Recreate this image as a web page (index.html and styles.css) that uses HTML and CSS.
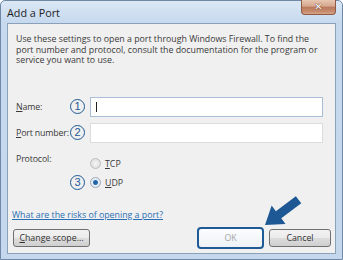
FILE: index.html
```html
<!DOCTYPE html>
<html lang="en">
<head>
    <meta charset="UTF-8">
    <title>Add a Port</title>
    <link rel="stylesheet" href="styles.css">
</head>
<body>
    <div class="window">
        <div class="titlebar">
            <span class="title">Add a Port</span>
            <span class="close">&#x2715;</span>
        </div>
        <div class="panel">
            <p class="intro">Use these settings to open a port through Windows Firewall. To find the port number and protocol, consult the documentation for the program or service you want to use.</p>

            <div class="field name">
                <span class="label"><u>N</u>ame:</span>
                <span class="num">1</span>
                <div class="input focused"><span class="caret"></span></div>
            </div>
            <div class="field port">
                <span class="label"><u>P</u>ort number:</span>
                <span class="num">2</span>
                <div class="input"></div>
            </div>
            <div class="field proto">
                <span class="label top">Protocol:</span>
                <span class="num empty"></span>
                <span class="radio"><span class="dot"></span><u>T</u>CP</span>
            </div>
            <div class="field udp">
                <span class="label"></span>
                <span class="num">3</span>
                <span class="radio checked"><span class="dot"></span><u>U</u>DP</span>
            </div>

            <a class="link" href="#">What are the risks of opening a port?</a>

            <div class="buttons">
                <span class="btn scope"><u>C</u>hange scope...</span>
                <span class="btn ok">OK</span>
                <span class="btn cancel">Cancel</span>
            </div>
        </div>

        <!-- pointer arrow over the OK button -->
        <svg class="arrow" width="50" height="40" viewBox="0 0 50 40">
            <polygon transform="translate(7,33) rotate(-37)" points="0,0 17,-11.5 17,-4.5 42,-4.5 42,4.5 17,4.5 17,11.5" fill="#1d5894"/>
        </svg>
    </div>
</body>
</html>
```

FILE: styles.css
```css
body,html{
    margin: 0;
    padding: 0;
}
body{
    width: 343px;
    height: 260px;
    background: #fff;
    font-family: "Open Sans", "Noto Sans", sans-serif;
}
.window{
    position: relative;
    box-sizing: border-box;
    width: 343px;
    height: 260px;
    border: 1px solid #6f88a6;
    border-radius: 5px 5px 0 0;
    padding: 0 6px 5px 6px;
    background: linear-gradient(#dbe7f4, #c6d9ee 22px, #c4d7ed);
}
.titlebar{
    display: flex;
    height: 22px;
}
.title{
    align-self: center;
    font-size: 10.8px;
    color: #1e1e1e;
    margin-top: 1px;
}
.close{
    margin-left: auto;
    margin-top: -1px;
    width: 35px;
    height: 15px;
    box-sizing: border-box;
    border: 1px solid #8e5a44;
    border-top: none;
    border-radius: 0 0 4px 4px;
    background: linear-gradient(#e8c7b2, #d5a68c 45%, #b9785b 50%, #c98d6f 85%, #d9a68a);
    color: #fff;
    font-family: "DejaVu Sans", sans-serif;
    font-size: 10px;
    font-weight: bold;
    line-height: 14px;
    text-align: center;
    text-shadow: 0 0 1px #6b3a26, 0 0 1px #6b3a26;
}
.panel{
    box-sizing: border-box;
    height: 231px;
    border: 1px solid #8ba0b9;
    background: #f0f0f0;
    padding: 0 4px 0 5px;
    font-size: 8.8px;
    color: #3a3a3a;
}
.intro{
    margin: 10px 4px 0 3px;
    line-height: 10.5px;
}
.field{
    display: flex;
    align-items: center;
    margin: 0 8px 0 3px;
}
.field.name{
    margin-top: 31px;
    height: 20px;
}
.field.port{
    margin-top: 6px;
    height: 20px;
}
.field.proto{
    margin-top: 10px;
    height: 22px;
}
.field.udp{
    margin-top: 1px;
    height: 14px;
}
.label{
    width: 54px;
    flex: none;
    white-space: nowrap;
    letter-spacing: -0.15px;
}
.label.top{
    align-self: flex-start;
    line-height: 12px;
}
.num{
    flex: none;
    width: 15px;
    height: 15px;
    margin-right: 5px;
    box-sizing: border-box;
    border: 1.6px solid #1d5894;
    border-radius: 50%;
    color: #1d5894;
    font-family: "Liberation Sans", sans-serif;
    font-size: 11px;
    line-height: 12px;
    text-align: center;
}
.num.empty{
    border: none;
}
.input{
    flex: 1;
    height: 20px;
    box-sizing: border-box;
    border: 1px solid #dcdcdc;
    background: #fff;
    padding: 4px 5px;
}
.input.focused{
    border-color: #a9bed6;
}
.caret{
    display: block;
    width: 1px;
    height: 10px;
    background: #222;
}
.radio{
    display: flex;
    align-items: center;
}
.dot{
    width: 9px;
    height: 9px;
    margin-right: 4px;
    border: 1px solid #bdbdbd;
    border-radius: 50%;
    background: radial-gradient(#f6f6f6, #d8d8d8);
}
.radio.checked .dot{
    border-color: #9aa9ba;
    background: radial-gradient(#1d5fa3 0, #2a6db0 2px, #e9eef4 3px, #dfe5ec);
}
.link{
    display: block;
    margin: 19px 0 0 -1px;
    line-height: 12px;
    color: #2a6fb3;
    text-decoration: underline;
}
.buttons{
    display: flex;
    align-items: center;
    margin-top: 6px;
    height: 22px;
}
.btn{
    box-sizing: border-box;
    height: 18px;
    border: 1px solid #707070;
    border-radius: 3px;
    background: linear-gradient(#f2f2f2, #ebebeb 50%, #dddddd 51%, #cfcfcf);
    text-align: center;
    line-height: 16px;
    color: #333;
}
.scope{
    width: 77px;
}
.ok{
    margin-left: auto;
    width: 67px;
    height: 22px;
    border: 2px solid #1f5a95;
    border-radius: 4px;
    background: linear-gradient(#fbfcfd, #eef2f6);
    line-height: 18px;
    color: #a6a6a6;
}
.cancel{
    margin-left: 5px;
    width: 62px;
}
.arrow{
    position: absolute;
    left: 257px;
    top: 191px;
}
```
